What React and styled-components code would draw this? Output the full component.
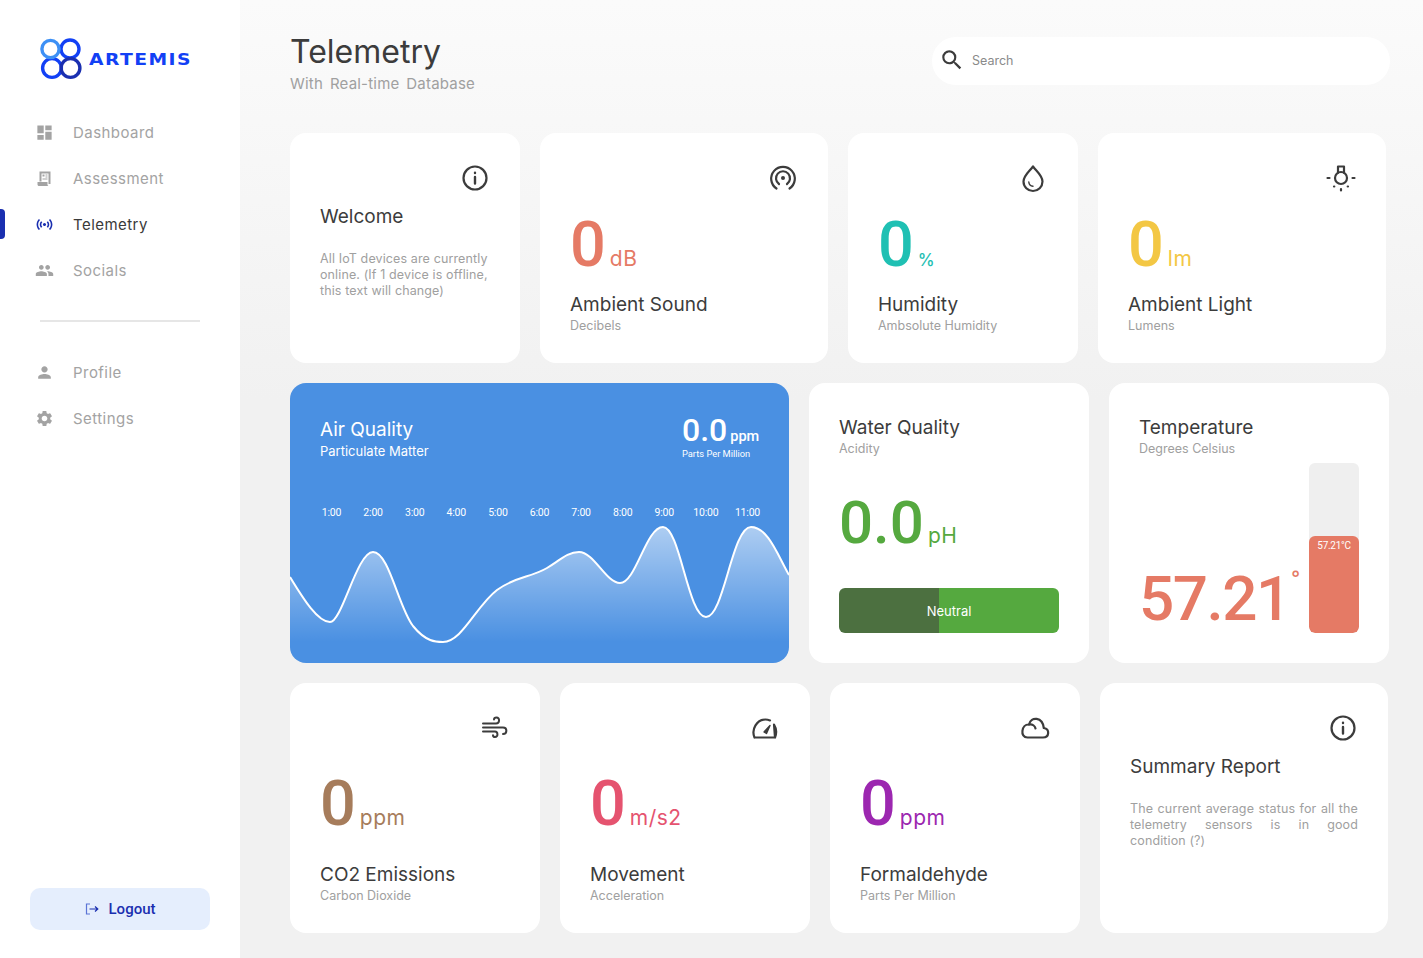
import React from "react"
import styled, { createGlobalStyle } from 'styled-components'
import { MdDashboard, MdPeople, MdPerson, MdSettings, MdSearch, MdSensors } from 'react-icons/md'

const Global = createGlobalStyle`
    * { box-sizing: border-box; }
    html, body { margin: 0; padding: 0; }
    body {
        font-family: "Inter", "Liberation Sans", sans-serif;
        background: #f1f1f1;
    }
`

const Page = styled.div`
    display: flex;
    width: 1423px;
    height: 958px;
    overflow: hidden;
`

const Sidebar = styled.aside`
    display: flex;
    flex-direction: column;
    width: 240px;
    background: #fff;
    padding: 38px 30px 28px 0;
`

const Brand = styled.div`
    display: flex;
    align-items: center;
    gap: 5px;
    padding-left: 39px;
    margin-bottom: 38px;
`

const BrandName = styled.span`
    font-family: "DejaVu Sans", sans-serif;
    font-size: 15px;
    font-weight: 700;
    letter-spacing: 1.15px;
    margin-top: 1px;
    color: #1240f5;
    transform: scaleX(1.25);
    transform-origin: left center;
`

const NavList = styled.nav`
    display: flex;
    flex-direction: column;
    gap: 18px;
`

const NavItem = styled.div`
    display: flex;
    align-items: center;
    height: 28px;
    padding-left: 34.5px;
    position: relative;
    font-size: 15px;
    letter-spacing: 0.45px;
    color: ${p => p.$active ? '#3a3a3a' : '#a3a3a3'};
    svg { flex: none; margin-right: 19.5px; width: 19px; height: 19px; color: ${p => p.$active ? '#1a2fb0' : '#a3a3a3'}; }
`

const ActiveMark = styled.span`
    position: absolute;
    left: 0;
    top: -1px;
    width: 5px;
    height: 30px;
    border-radius: 0 4px 4px 0;
    background: #1a2fb0;
`

const Divider = styled.hr`
    width: 160px;
    height: 2px;
    border: 0;
    background: #e6e6e6;
    margin: 36px 0 36px 40px;
`

const LogoutButton = styled.button`
    display: flex;
    align-items: center;
    justify-content: center;
    gap: 10px;
    width: 180px;
    height: 42px;
    margin: auto 0 0 30px;
    border: 0;
    border-radius: 10px;
    background: #e5eefd;
    color: #1a2fb0;
    font-family: "Roboto", sans-serif;
    font-weight: 500;
    font-size: 15px;
`

const Main = styled.main`
    flex: 1;
    padding: 33px 0 0 50px;
    background: linear-gradient(180deg, #fbfbfb 0, #f1f1f1 400px);
`

const Header = styled.header`
    display: flex;
    justify-content: space-between;
    align-items: center;
    height: 62px;
    width: 1100px;
    margin-bottom: 38px;
`

const Title = styled.h1`
    margin: 0;
    font-size: 32px;
    line-height: 36px;
    font-weight: 400;
    color: #3c3c3c;
`

const Subtitle = styled.p`
    margin: 4px 0 0;
    font-size: 15px;
    line-height: 20px;
    letter-spacing: 0.2px;
    word-spacing: 2.5px;
    color: #a0a0a0;
`

const SearchBar = styled.div`
    display: flex;
    align-items: center;
    gap: 7px;
    width: 458px;
    height: 48px;
    padding: 0 0 2px 7px;
    border-radius: 24px;
    background: #fff;
    font-size: 12.5px;
    color: #8a8a8a;
    margin-top: -6px;
    svg { width: 26px; height: 26px; color: #3c3c3c; }
`

const Rows = styled.div`
    display: flex;
    flex-direction: column;
    gap: 20px;
`

const Row = styled.div`
    display: flex;
    gap: 20px;
    height: ${p => p.$height}px;
`

const Card = styled.section`
    display: flex;
    flex-direction: column;
    flex: none;
    width: ${p => p.$width}px;
    padding: 30px;
    background: #fff;
    border-radius: 16px;
`

const CardIcon = styled.svg`
    align-self: flex-end;
    flex: none;
    width: 30px;
    height: 30px;
    fill: none;
    stroke: #3c3c3c;
    stroke-width: 2.2;
    stroke-linecap: round;
    stroke-linejoin: round;
`

const Value = styled.div`
    display: flex;
    align-items: baseline;
    gap: 4px;
    margin-top: ${p => p.$top}px;
    font-family: "Roboto", sans-serif;
    color: ${p => p.$color};
    line-height: 60px;
`

const Big = styled.span`
    font-size: ${p => p.$size ?? 63}px;
    font-weight: 500;
`

const Unit = styled.span`
    font-family: "Inter", sans-serif;
    font-size: ${p => p.$size ?? 21}px;
    font-weight: ${p => p.$weight ?? 400};
    letter-spacing: 0.5px;
`

const CardTitle = styled.h3`
    margin: ${p => p.$top ?? 0}px 0 0;
    font-size: 19px;
    line-height: 24px;
    font-weight: 400;
    color: #3c3c3c;
`

const CardSub = styled.p`
    margin: 0;
    font-size: 12.5px;
    line-height: 18px;
    color: #a0a0a0;
`

const Body = styled.p`
    margin: 22px 0 0;
    font-size: 12.5px;
    letter-spacing: 0.12px;
    line-height: 16px;
    color: #a0a0a0;
    text-align: ${p => p.$justify ? 'justify' : 'left'};
`

const AirCard = styled.section`
    display: flex;
    flex-direction: column;
    flex: none;
    width: 499px;
    background: #4a90e2;
    border-radius: 16px;
    overflow: hidden;
    color: #fff;
`

const AirHead = styled.div`
    display: flex;
    justify-content: space-between;
    padding: 35px 30px 0;
`

const AirTitle = styled.h3`
    margin: 0;
    font-size: 19px;
    line-height: 24px;
    font-weight: 400;
`

const AirSub = styled.p`
    margin: 0;
    font-size: 13px;
    line-height: 18px;
`

const AirValue = styled.div`
    font-family: "Roboto", sans-serif;
    font-size: 14.5px;
    font-weight: 500;
    line-height: 26px;
    width: 77px;
    white-space: nowrap;
    margin-top: -1px;
    span { font-size: 32px; margin-right: 3px; }
`

const AirNote = styled.p`
    margin: -3px 0 0;
    font-family: "Roboto", sans-serif;
    font-size: 9.3px;
    line-height: 14px;
`

const Hours = styled.div`
    display: grid;
    grid-template-columns: repeat(11, 1fr);
    padding: 0 20.7px;
    margin-top: 45px;
    font-family: "Roboto", sans-serif;
    font-size: 10.5px;
    letter-spacing: -0.2px;
    line-height: 14px;
    text-align: center;
`

const Chart = styled.svg`
    display: block;
    flex: none;
    width: 499px;
    height: 144px;
`

const PhBar = styled.div`
    display: flex;
    align-items: center;
    justify-content: center;
    height: 45px;
    margin-top: 22px;
    border-radius: 6px;
    color: #fff;
    font-size: 13px;
    background: linear-gradient(90deg, #4c7040 0, #4c7040 100px, #55a93f 100px);
`

const TempWrap = styled.div`
    display: flex;
    justify-content: space-between;
    align-items: flex-end;
    flex: 1;
    margin-top: -1px;
`

const TempValue = styled.div`
    display: flex;
    font-family: "Roboto", sans-serif;
    font-size: 62px;
    font-weight: 500;
    line-height: 64px;
    letter-spacing: -1.5px;
    color: #e57a65;
    padding-bottom: 2px;
`

const Degree = styled.span`
    font-size: 26px;
    line-height: 26px;
    margin: 0 0 0 1px;
    font-weight: 400;
`

const Thermo = styled.div`
    display: flex;
    flex: none;
    flex-direction: column;
    justify-content: flex-end;
    width: 50px;
    height: 170px;
    border-radius: 6px;
    background: #efefef;
    overflow: hidden;
`

const ThermoFill = styled.div`
    border-radius: 6px;
    background: #e57a65;
    color: #fff;
    font-family: "Roboto", sans-serif;
    font-size: 10px;
    letter-spacing: -0.3px;
    line-height: 20px;
    text-align: center;
`

const Logo = () => (
    <svg width="45" height="42" viewBox="0 0 45 42" fill="none" strokeWidth="3.4">
        <circle cx="31" cy="11" r="9" stroke="#1240f5" />
        <circle cx="13" cy="30" r="9.4" stroke="#1240f5" />
        <circle cx="31.5" cy="30" r="9.4" stroke="#1a2fb0" />
        <circle cx="11.5" cy="11" r="8.6" stroke="#3d90f5" />
    </svg>
)

const AssessmentIcon = () => (
    <svg viewBox="-1.5 -1.5 19 19" fill="#a3a3a3">
        <path d="M3 1h11v12.5H12V3H5v8H3zM6 4h2v2H6zM9 4h2v1H9zM9 6h2v1H9zM6 8h5v1H6z" />
        <path d="M1 11.5h10V14c0 .8.5 1.2 1 1.5H2.5C1.6 15.500 1 14.900 1 14z" />
    </svg>
)

const LogoutIcon = () => (
    <svg width="14" height="14" viewBox="0 0 14 14" fill="none" stroke="#1a2fb0" strokeWidth="1.2">
        <path d="M5 2H1.500v10H5" stroke="#5b74d6" />
        <path d="M4.500 7h8.500M10 4.500 12.800 7 10 9.500" />
    </svg>
)

const InfoIcon = () => (
    <CardIcon viewBox="0 0 30 30">
        <circle cx="15" cy="15" r="11.500" />
        <path d="M15 14v6.500M15 9.700v.3" strokeWidth="2.400" />
    </CardIcon>
)

const SignalIcon = () => (
    <CardIcon viewBox="0 0 30 30">
        <path d="M8.500 25.500a11.800 11.800 0 1 1 13 0" />
        <path d="M11 21a7 7 0 1 1 8 0" />
        <circle cx="15" cy="15" r="2" fill="#3c3c3c" stroke="none" />
    </CardIcon>
)

const DropIcon = () => (
    <CardIcon viewBox="0 0 30 30">
        <path d="M15 3.500c3.500 4.800 9.500 9 9.500 15a9.500 9.500 0 0 1-19 0c0-6 6-10.200 9.500-15z" />
        <path d="M10.800 19c.2 2.300 1.800 4 4.200 4.200" strokeWidth="1.400" />
    </CardIcon>
)

const BulbIcon = () => (
    <CardIcon viewBox="0 0 30 30">
        <path d="M12 9.800V3.500h6v6.300" />
        <circle cx="15" cy="15" r="6" />
        <path d="M1.500 15h2M26.500 15h2M15 26v1.500M8 23.500h.3M21.700 23.500h.3" />
    </CardIcon>
)

const WindIcon = () => (
    <CardIcon viewBox="0 0 30 30">
        <path d="M3 10.500h13c4 0 4-6 .5-6-1.500 0-2.500 1-2.500 2M3 14.500h20c4.500 0 4.500 6.500 0 6.500M3 18.500h12c3 0 3.500 5.500 0 5.500-1 0-2-.8-2-1.800" strokeWidth="2" />
    </CardIcon>
)

const GaugeIcon = () => (
    <CardIcon viewBox="0 0 30 30">
        <path d="M4.500 24.500C1 16 7 6.500 15.500 6.500c1.500 0 3 .3 4.500.9M24 11.500c2.500 4 2.600 9 1 13zM4.500 24.500H25" />
        <path d="M14 19 20 12.500 16.500 20.500z" fill="#3c3c3c" strokeWidth="1.400" />
    </CardIcon>
)

const CloudIcon = () => (
    <CardIcon viewBox="0 0 30 30">
        <path d="M7.500 24.500H23c6.500 0 7-8.500.8-9.500C22.500 4 11 3 9 11.500 1.500 11-.5 24.500 7.500 24.500z" />
        <path d="M9 11.500c3.500-.5 6 1.500 6.500 4" />
    </CardIcon>
)

const Chartline = "M0 193C14 216 28 238 40 238C52 238 67 168 83 168C99 168 108 222 123 242C136 258 146 258 153 258C172 258 186 222 207 206C226 192 240 194 257 184C270 176 278 168 289 168C304 168 316 199 330 199C346 199 356 143 373 143C390 143 398 233 416 233C434 233 442 143 461 143C478 143 488 172 499 191"

const hours = ['1:00', '2:00', '3:00', '4:00', '5:00', '6:00', '7:00', '8:00', '9:00', '10:00', '11:00']

const navTop = [
    { label: 'Dashboard', icon: <MdDashboard /> },
    { label: 'Assessment', icon: <AssessmentIcon /> },
    { label: 'Telemetry', icon: <MdSensors />, active: true },
    { label: 'Socials', icon: <MdPeople /> },
]

const navBottom = [
    { label: 'Profile', icon: <MdPerson /> },
    { label: 'Settings', icon: <MdSettings /> },
]

const SensorCard = ({ width, icon, value, unit, unitSize, unitWeight, color, title, sub, valueTop = 22, titleTop = 4 }) => (
    <Card $width={width}>
        {icon}
        <Value $color={color} $top={valueTop}>
            <Big>{value}</Big>
            <Unit $size={unitSize} $weight={unitWeight}>{unit}</Unit>
        </Value>
        <CardTitle $top={titleTop}>{title}</CardTitle>
        <CardSub>{sub}</CardSub>
    </Card>
)

const App = () => {
    return (
        <Page>
            <Global />
            <Sidebar>
                <Brand>
                    <Logo />
                    <BrandName>ARTEMIS</BrandName>
                </Brand>
                <NavList>
                    {navTop.map(item => (
                        <NavItem key={item.label} $active={item.active}>
                            {item.active && <ActiveMark />}
                            {item.icon}
                            {item.label}
                        </NavItem>
                    ))}
                </NavList>
                <Divider />
                <NavList>
                    {navBottom.map(item => (
                        <NavItem key={item.label}>
                            {item.icon}
                            {item.label}
                        </NavItem>
                    ))}
                </NavList>
                <LogoutButton><LogoutIcon />Logout</LogoutButton>
            </Sidebar>
            <Main>
                <Header>
                    <div>
                        <Title>Telemetry</Title>
                        <Subtitle>With Real-time Database</Subtitle>
                    </div>
                    <SearchBar><MdSearch />Search</SearchBar>
                </Header>
                <Rows>
                    <Row $height={230}>
                        <Card $width={230}>
                            <InfoIcon />
                            <CardTitle $top={12}>Welcome</CardTitle>
                            <Body>All IoT devices are currently online. (If 1 device is offline, this text will change)</Body>
                        </Card>
                        <SensorCard width={288} icon={<SignalIcon />} value="0" unit="dB" color="#e57a65" title="Ambient Sound" sub="Decibels" />
                        <SensorCard width={230} titleTop={3} icon={<DropIcon />} value="0" unit="%" unitSize={17} unitWeight={500} color="#1fc0b3" title="Humidity" sub="Ambsolute Humidity" />
                        <SensorCard width={288} icon={<BulbIcon />} value="0" unit="lm" color="#f3c744" title="Ambient Light" sub="Lumens" />
                    </Row>
                    <Row $height={280}>
                        <AirCard>
                            <AirHead>
                                <div>
                                    <AirTitle>Air Quality</AirTitle>
                                    <AirSub>Particulate Matter</AirSub>
                                </div>
                                <div>
                                    <AirValue><span>0.0</span>ppm</AirValue>
                                    <AirNote>Parts Per Million</AirNote>
                                </div>
                            </AirHead>
                            <Hours>
                                {hours.map(h => <span key={h}>{h}</span>)}
                            </Hours>
                            <Chart viewBox="0 136 499 144">
                                <defs>
                                    <linearGradient id="airFill" x1="0" y1="143" x2="0" y2="258" gradientUnits="userSpaceOnUse">
                                        <stop offset="0" stopColor="#fff" stopOpacity="0.55" />
                                        <stop offset="1" stopColor="#fff" stopOpacity="0" />
                                    </linearGradient>
                                </defs>
                                <path d={`${Chartline}V280H0Z`} fill="url(#airFill)" />
                                <path d={Chartline} fill="none" stroke="#fff" strokeWidth="2" />
                            </Chart>
                        </AirCard>
                        <Card $width={280}>
                            <CardTitle $top={3}>Water Quality</CardTitle>
                            <CardSub>Acidity</CardSub>
                            <Value $color="#55a93f" $top={35}>
                                <Big $size={60}>0.0</Big>
                                <Unit>pH</Unit>
                            </Value>
                            <PhBar>Neutral</PhBar>
                        </Card>
                        <Card $width={280}>
                            <CardTitle $top={3}>Temperature</CardTitle>
                            <CardSub>Degrees Celsius</CardSub>
                            <TempWrap>
                                <TempValue>57.21<Degree>°</Degree></TempValue>
                                <Thermo>
                                    <ThermoFill style={{ height: '57.21%' }}>57.21°C</ThermoFill>
                                </Thermo>
                            </TempWrap>
                        </Card>
                    </Row>
                    <Row $height={250}>
                        <SensorCard width={250} valueTop={31} titleTop={15} icon={<WindIcon />} value="0" unit="ppm" color="#a67c5b" title="CO2 Emissions" sub="Carbon Dioxide" />
                        <SensorCard width={250} valueTop={31} titleTop={15} icon={<GaugeIcon />} value="0" unit="m/s2" color="#e5536f" title="Movement" sub="Acceleration" />
                        <SensorCard width={250} valueTop={31} titleTop={15} icon={<CloudIcon />} value="0" unit="ppm" color="#9c27b0" title="Formaldehyde" sub="Parts Per Million" />
                        <Card $width={288}>
                            <InfoIcon />
                            <CardTitle $top={12}>Summary Report</CardTitle>
                            <Body $justify>The current average status for all the telemetry sensors is in good condition{'\u00a0'}(?)</Body>
                        </Card>
                    </Row>
                </Rows>
            </Main>
        </Page>
    )
}

export default App
